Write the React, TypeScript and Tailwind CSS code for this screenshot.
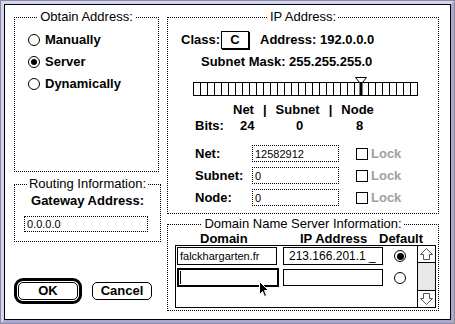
import React from "react"

interface GroupProps {
  title: string
  className?: string
  children?: React.ReactNode
}

const Group: React.FC<GroupProps> = ({ title, className, children }) => (
  <fieldset className={`border border-dotted border-black ${className ?? ""}`}>
    <legend className="mx-auto px-[2px] text-[13px] leading-[14px]">{title}</legend>
    {children}
  </fieldset>
)

const Radio = ({ checked, dot = 6 }: { checked?: boolean; dot?: number }) => (
  <span className="flex h-[12px] w-[12px] shrink-0 items-center justify-center rounded-full border border-black bg-white">
    {checked && (
      <span
        className={`rounded-full bg-black ${dot === 6 ? "h-[6px] w-[6px]" : "h-[7px] w-[7px]"}`}
      />
    )}
  </span>
)

const FieldRow = ({ label, value }: { label: string; value: string }) => (
  <div className="flex h-[17px] items-center pl-[14px]">
    <span className="w-[57px]">{label}</span>
    <span className="flex h-[17px] w-[87px] items-center border border-dotted border-black pl-[2px] text-[11px] font-normal">
      {value}
    </span>
    <span className="ml-[17px] h-[12px] w-[12px] border border-black" />
    <span className="ml-[3px] text-[#a0a0a0]">Lock</span>
  </div>
)

const ArrowUp = () => (
  <svg width="17" height="16" viewBox="0 0 17 16">
    <path d="M8.5 2.5 L14.5 8.5 L11.5 8.5 L11.5 13.5 L5.5 13.5 L5.5 8.5 L2.5 8.5 Z" fill="white" stroke="#555" />
  </svg>
)

const ArrowDown = () => (
  <svg width="17" height="16" viewBox="0 0 17 16">
    <path d="M8.5 13.5 L14.5 7.5 L11.5 7.5 L11.5 2.5 L5.5 2.5 L5.5 7.5 L2.5 7.5 Z" fill="white" stroke="#555" />
  </svg>
)

export default function App() {
  return (
    <div className="h-[324px] w-[455px] bg-[#8c8c8c] p-[1px] font-['Liberation_Sans',Arial,sans-serif] text-black">
      <div className="h-full w-full border-[3px] border-t-[#d4d4f8] border-l-[#d4d4f8] border-r-[#a8a8d8] border-b-[#a8a8d8] bg-[#c4c4ec]">
        <div className="relative flex h-full w-full gap-[7px] border border-black bg-white pl-[9px] pt-[5px]">
          {/* left column */}
          <div className="flex w-[146px] flex-col">
            <Group title="Obtain Address:" className="h-[162px] w-[145px]">
              <div className="flex flex-col pl-[13px] pt-[5px] text-[13px] font-bold">
                {[
                  ["Manually", false],
                  ["Server", true],
                  ["Dynamically", false],
                ].map(([label, on]) => (
                  <div key={label as string} className="flex h-[22px] items-center gap-[5px]">
                    <Radio checked={on as boolean} />
                    <span>{label}</span>
                  </div>
                ))}
              </div>
            </Group>

            <Group title="Routing Information:" className="mt-[5px] h-[65px] w-[147px]">
              <div className="pt-[3px] text-center text-[13px] font-bold leading-[14px]">
                Gateway Address:
              </div>
              <div className="ml-[9px] mt-[8px] flex h-[16px] w-[124px] items-center border border-dotted border-black pl-[2px] text-[11px]">
                0.0.0.0
              </div>
            </Group>

            <div className="mt-[36px] flex items-center gap-[10px] text-[13px] font-bold">
              <div className="rounded-[9px] border-[3px] border-black p-[1px]">
                <div className="flex h-[18px] w-[60px] items-center justify-center rounded-[5px] border border-black">
                  OK
                </div>
              </div>
              <div className="flex h-[18px] w-[60px] items-center justify-center rounded-[5px] border border-black">
                Cancel
              </div>
            </div>
          </div>

          {/* right column */}
          <div className="flex w-[272px] flex-col">
            <Group title="IP Address:" className="h-[204px] w-[272px]">
              <div className="pl-[13px] text-[13px] font-bold leading-[16px]">
                <div className="mt-[7px] flex h-[18px] items-center">
                  <span>Class:</span>
                  <span className="ml-[1px] flex h-[18px] w-[28px] items-center justify-center border border-black shadow-[1px_1px_0_#000]">
                    C
                  </span>
                  <span className="ml-[11px]">Address: 192.0.0.0</span>
                </div>
                <div className="mt-[5px] h-[16px] pl-[20px]">Subnet Mask: 255.255.255.0</div>
                <svg width="226" height="20" className="ml-[12px] mt-[7px] block">
                  <rect x="0.5" y="5.5" width="224" height="13" fill="white" stroke="black" />
                  {Array.from({ length: 31 }, (_, i) => (
                    <line
                      key={i}
                      x1={7 * (i + 1) + 0.5}
                      y1="6"
                      x2={7 * (i + 1) + 0.5}
                      y2="18"
                      stroke="black"
                    />
                  ))}
                  <rect x="166.5" y="4" width="3" height="15" fill="black" />
                  <polygon points="162.5,0.5 173.5,0.5 169.5,5.5 166.5,5.5" fill="white" stroke="black" />
                </svg>
                <div className="mt-[5px] flex h-[16px] gap-[9px] pl-[52px]">
                  <span>Net</span>
                  <span>|</span>
                  <span>Subnet</span>
                  <span>|</span>
                  <span>Node</span>
                </div>
                <div className="flex h-[16px] pl-[14px]">
                  <span className="w-[45px]">Bits:</span>
                  <span className="w-[56px]">24</span>
                  <span className="w-[60px]">0</span>
                  <span>8</span>
                </div>
                <div className="mt-[11px] flex flex-col gap-[5px]">
                  <FieldRow label="Net:" value="12582912" />
                  <FieldRow label="Subnet:" value="0" />
                  <FieldRow label="Node:" value="0" />
                </div>
              </div>
            </Group>

            <Group title="Domain Name Server Information:" className="mt-[3px] h-[94px] w-[272px]">
              <div className="flex h-[14px] pl-[32px] text-[13px] font-bold leading-[16px]">
                <span className="w-[100px]">Domain</span>
                <span className="w-[79px]">IP Address</span>
                <span>Default</span>
              </div>
              <div className="ml-[7px] flex h-[63px] w-[261px] border border-black">
                <div className="flex flex-1 flex-col pl-[1px] pt-[1px]">
                  <div className="flex h-[18px] items-center">
                    <span className="flex h-[18px] w-[100px] items-center border border-black pl-[2px] text-[11px]">
                      falckhargarten.fr
                    </span>
                    <span className="ml-[6px] flex h-[18px] w-[100px] items-center border border-black pl-[5px] text-[12px]">
                      213.166.201.1 _
                    </span>
                    <span className="ml-[11px]">
                      <Radio checked dot={7} />
                    </span>
                  </div>
                  <div className="mt-[3px] flex h-[19px] items-center">
                    <span className="flex h-[19px] w-[102px] items-center border-2 border-black">
                      <span className="ml-[1px] h-[13px] w-[1px] bg-black" />
                    </span>
                    <span className="ml-[4px] h-[17px] w-[100px] border border-black" />
                    <span className="ml-[11px]">
                      <Radio />
                    </span>
                  </div>
                </div>
                <div className="flex w-[18px] flex-col justify-between border-l border-black bg-[#e8e8e8]">
                  <div className="h-[17px] border-b border-black bg-white">
                    <ArrowUp />
                  </div>
                  <div className="h-[17px] border-t border-black bg-white">
                    <ArrowDown />
                  </div>
                </div>
              </div>
            </Group>
          </div>

          {/* mouse pointer */}
          <svg width="12" height="18" viewBox="0 0 12 18" className="absolute left-[253px] top-[275px]">
            <path d="M1.5 1.5 L1.5 14.5 L4.5 11.5 L6.5 16.5 L8.5 15.5 L6.5 10.5 L10.5 10.5 Z" fill="black" stroke="white" />
          </svg>
        </div>
      </div>
    </div>
  )
}
